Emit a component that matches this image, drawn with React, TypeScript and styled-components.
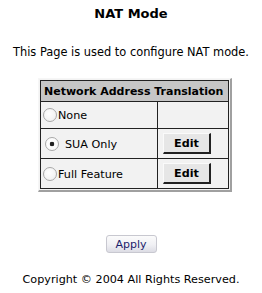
import React from 'react';
import styled, { createGlobalStyle } from 'styled-components';

const GlobalStyle = createGlobalStyle`
  html, body {
    margin: 0;
    padding: 0;
    background: #ffffff;
  }
  body {
    font-family: 'DejaVu Sans', sans-serif;
    font-size: 11px;
    color: #000;
  }
`;

type Mode = {
  id: string;
  label: string;
  checked?: boolean;
  editable?: boolean;
};

const modes: Mode[] = [
  { id: 'none', label: 'None' },
  { id: 'sua', label: 'SUA Only', checked: true, editable: true },
  { id: 'full', label: 'Full Feature', editable: true },
];

const App = (): JSX.Element => {
  return (
    <StyledPage>
      <GlobalStyle />
      <StyledTitle>NAT Mode</StyledTitle>
      <StyledIntro>This Page is used to configure NAT mode.</StyledIntro>
      <StyledFrame>
        <StyledTable>
          <thead>
            <tr>
              <StyledHeadCell colSpan={2}>Network Address Translation</StyledHeadCell>
            </tr>
          </thead>
          <tbody>
            {modes.map((mode) => (
              <tr key={mode.id}>
                <StyledLabelCell rowHeight={mode.editable ? 29 : 26}>
                  <StyledRadio checked={!!mode.checked} />
                  {mode.label}
                </StyledLabelCell>
                <StyledActionCell>{mode.editable && <StyledEditButton>Edit</StyledEditButton>}</StyledActionCell>
              </tr>
            ))}
          </tbody>
        </StyledTable>
      </StyledFrame>
      <StyledApplyButton>Apply</StyledApplyButton>
      <StyledCopyright>Copyright © 2004 All Rights Reserved.</StyledCopyright>
    </StyledPage>
  );
};

export default App;

const StyledPage = styled.div`
  width: 262px;
  display: flex;
  flex-direction: column;
  align-items: center;
`;

const StyledTitle = styled.h1`
  margin: 6px 0 0;
  font-size: 13px;
  font-weight: bold;
  line-height: 16px;
`;

const StyledIntro = styled.p`
  margin: 23px 0 0;
  font-size: 11.4px;
  line-height: 14px;
`;

const StyledFrame = styled.div`
  margin: 19px 0 0 8px;
  padding: 1px;
  background: #f2f2f2;
  border-top: 1px solid #f6f6f6;
  border-left: 1px solid #f6f6f6;
  border-right: 2px solid #a0a0a0;
  border-bottom: 2px solid #a0a0a0;
`;

const StyledTable = styled.table`
  border-collapse: collapse;
  width: 189px;
  background: #f2f2f2;
  border: 1px solid #222;
`;

const StyledHeadCell = styled.th`
  background: #c6c6c6;
  border: 1px solid #222;
  padding: 0 3px;
  height: 20px;
  font-size: 11px;
  font-weight: bold;
  text-align: left;
  white-space: nowrap;
`;

const StyledLabelCell = styled.td<{ rowHeight: number }>`
  border: 1px solid #222;
  width: 112px;
  height: ${(p) => p.rowHeight}px;
  padding: 0 2px;
  white-space: nowrap;
  font-size: 11.2px;
`;

const StyledActionCell = styled.td`
  border: 1px solid #222;
  padding: 0 0 0 5px;
`;

const StyledRadio = styled.span<{ checked: boolean }>`
  display: inline-block;
  vertical-align: -3px;
  width: 12px;
  height: 12px;
  margin: 0 ${(p) => (p.checked ? '6px' : '1px')} 0 ${(p) => (p.checked ? '2px' : '0')};
  border-radius: 50%;
  border: 1px solid #a8a8a8;
  background: ${(p) =>
    p.checked
      ? 'radial-gradient(circle at 50% 50%, #222 0 2px, #fcfcfc 2.6px)'
      : 'radial-gradient(circle at 40% 40%, #ffffff, #ececec)'};
`;

const StyledEditButton = styled.button`
  width: 48px;
  height: 21px;
  padding: 0;
  font-family: 'DejaVu Sans', sans-serif;
  font-size: 11.2px;
  font-weight: bold;
  color: #000;
  background: #e6e6e6;
  border-top: 1px solid #fafafa;
  border-left: 1px solid #fafafa;
  border-right: 2px solid #222;
  border-bottom: 2px solid #222;
`;

const StyledApplyButton = styled.button`
  margin-top: 43px;
  width: 51px;
  height: 18px;
  padding: 0;
  font-family: 'DejaVu Sans', sans-serif;
  font-size: 11px;
  color: #1c1c6c;
  border: 1px solid #c8c8d0;
  border-radius: 3px;
  background: linear-gradient(#fbfbfb, #f0f0f4 55%, #dcdce4);
`;

const StyledCopyright = styled.p`
  margin: 20px 0 0;
  font-size: 11.2px;
  line-height: 14px;
`;
